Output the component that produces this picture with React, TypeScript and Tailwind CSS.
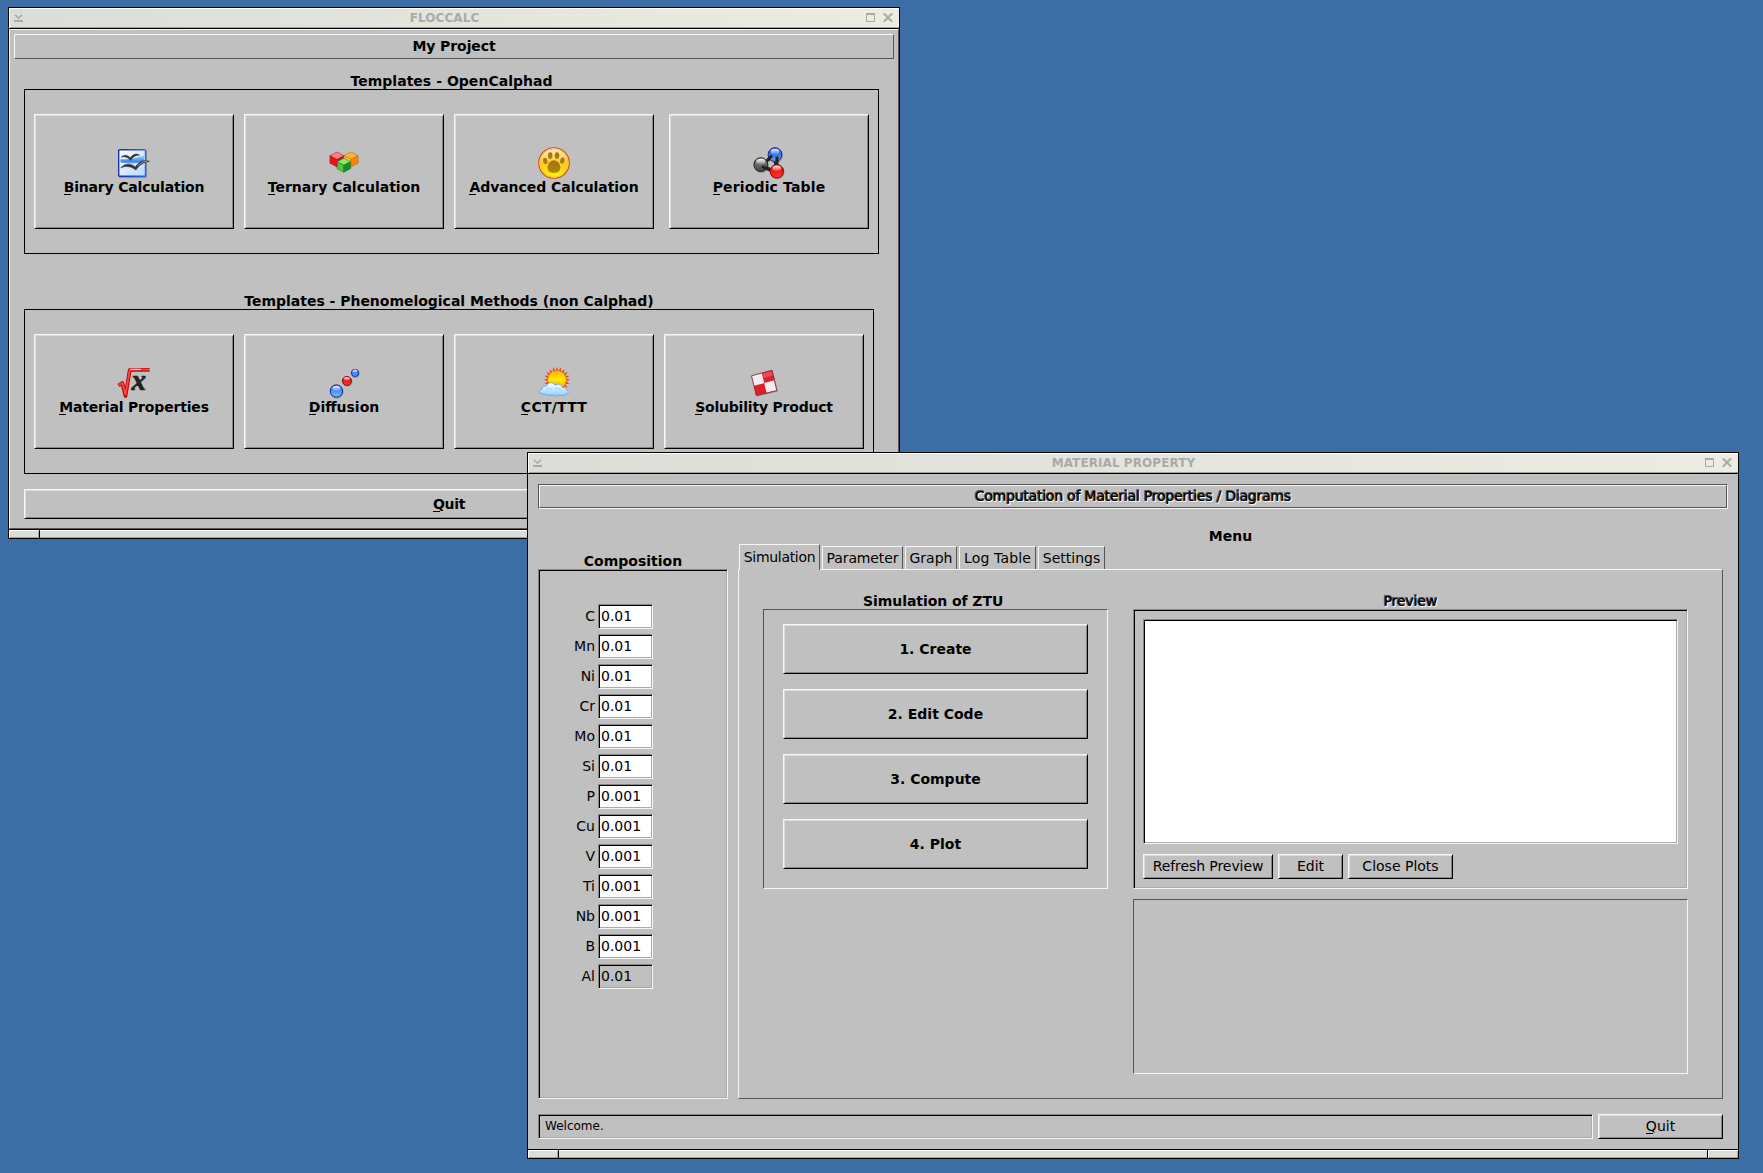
import React from "react";

const UP =
  "border border-t-[#f6f6f6] border-l-[#f6f6f6] border-r-black border-b-black shadow-[inset_1px_1px_#dcdcdc,inset_-1px_-1px_#858585]";
const DOWN =
  "border border-t-[#858585] border-l-[#858585] border-r-[#f6f6f6] border-b-[#f6f6f6] shadow-[inset_1px_1px_#000,inset_-1px_-1px_#aaaaaa]";
const THIN_UP = "border border-t-[#f6f6f6] border-l-[#f6f6f6] border-r-[#555] border-b-[#555]";
const THIN_DOWN = "border border-t-[#555] border-l-[#555] border-r-[#f6f6f6] border-b-[#f6f6f6]";
const ENGRAVED_TEXT =
  "[text-shadow:0_-1px_#555,-1px_-1px_#555,-1px_0_#555,0_1px_#f6f6f6,1px_1px_#f6f6f6,1px_0_#f6f6f6]";
const GROUP_LABEL = "h-[17px] text-center font-bold leading-[19px]";

function Mnemonic({ text, className = "" }: { text: string; className?: string }) {
  return (
    <span
      className={`relative whitespace-nowrap after:absolute after:left-0 after:top-[15px] after:h-px after:w-[7px] after:bg-black ${className}`}
    >
      {text}
    </span>
  );
}

function TitleBar({ title }: { title: string }) {
  return (
    <div className="flex h-[21px] shrink-0 items-center border-b border-black bg-gradient-to-r from-[#dcddd8] to-[#ecece2] pl-[5px] pr-[6px] shadow-[inset_1px_1px_#fff,inset_0_-1px_#a2a49c]">
      <svg width="9" height="9" viewBox="0 0 9 9" className="mt-px shrink-0" fill="none" stroke="#a9a9a6">
        <path d="M1 0.8L4.5 4.3L8 0.8" strokeWidth="1.5" />
        <path d="M0 7H9" strokeWidth="2" />
      </svg>
      <div className="flex-1 text-center text-[12px] font-bold leading-[18px] tracking-[0.08px] text-[#aaaaa8]">{title}</div>
      <svg width="9" height="9" viewBox="0 0 9 9" className="mt-[-1px] shrink-0" fill="none" stroke="#a9a9a6">
        <path d="M0.5 0V8.5H8.5V0" />
        <path d="M0 1H9" strokeWidth="2" />
      </svg>
      <svg width="10" height="9" viewBox="0 0 10 9" className="ml-2 mt-[-1px] shrink-0" fill="none" stroke="#a9a9a6" strokeWidth="2">
        <path d="M0.8 0.3L9.2 8.7M9.2 0.3L0.8 8.7" />
      </svg>
    </div>
  );
}

function Handle() {
  const part = "h-full bg-[#dcddd6] shadow-[inset_1px_1px_#fff,inset_-1px_-1px_#a2a49c]";
  return (
    <div className="flex h-[9px] shrink-0 gap-px border-t border-black bg-black">
      <div className={`w-[30px] ${part}`} />
      <div className="h-full flex-1 bg-[#dcddd6] shadow-[inset_0_1px_#fff,inset_0_-1px_#a2a49c]" />
      <div className={`w-[30px] ${part}`} />
    </div>
  );
}

function Ball({ cx, cy, r, id, from, to, edge }: { cx: number; cy: number; r: number; id: string; from: string; to: string; edge: string }) {
  return (
    <g>
      <defs>
        <linearGradient id={id} x1="0" y1="0" x2="0" y2="1">
          <stop offset="0" stopColor={from} />
          <stop offset="1" stopColor={to} />
        </linearGradient>
        <linearGradient id={`${id}Shine`} x1="0" y1="0" x2="0" y2="1">
          <stop offset="0" stopColor="#fff" stopOpacity="0.95" />
          <stop offset="1" stopColor="#fff" stopOpacity="0.15" />
        </linearGradient>
      </defs>
      <circle cx={cx + 0.5} cy={cy + 0.8} r={r} fill="#000" opacity="0.25" />
      <circle cx={cx} cy={cy} r={r - 0.5} fill={`url(#${id})`} stroke={edge} />
      <ellipse cx={cx} cy={cy - r * 0.42} rx={r * 0.6} ry={r * 0.38} fill={`url(#${id}Shine)`} />
    </g>
  );
}

function Cube({ x, y, r, top, left, right, edge }: { x: number; y: number; r: number; top: string; left: string; right: string; edge: string }) {
  const w = r * 0.95;
  const h = r * 0.5;
  return (
    <g stroke={edge} strokeWidth="0.5" strokeLinejoin="round">
      <path d={`M${x} ${y - r}L${x + w} ${y - h}L${x} ${y}L${x - w} ${y - h}Z`} fill={top} />
      <path d={`M${x - w} ${y - h}L${x} ${y}V${y + r}L${x - w} ${y + h}Z`} fill={left} />
      <path d={`M${x + w} ${y - h}L${x} ${y}V${y + r}L${x + w} ${y + h}Z`} fill={right} />
    </g>
  );
}

function Icon({ children }: { children: React.ReactNode }) {
  return (
    <svg width="32" height="32" viewBox="0 0 32 32" className="shrink-0 overflow-visible">
      {children}
    </svg>
  );
}

const BinaryIcon = () => (
  <Icon>
    <defs>
      <linearGradient id="doc" x1="0" y1="0" x2="1" y2="1">
        <stop offset="0" stopColor="#ffffff" />
        <stop offset="1" stopColor="#b0d8ff" />
      </linearGradient>
      <linearGradient id="docEdge" x1="0" y1="0" x2="1" y2="0">
        <stop offset="0" stopColor="#1c2fa8" />
        <stop offset="1" stopColor="#2468ee" />
      </linearGradient>
      <linearGradient id="sky" x1="0" y1="0" x2="0" y2="1">
        <stop offset="0" stopColor="#a8d2ff" />
        <stop offset="0.75" stopColor="#3a86f4" />
        <stop offset="1" stopColor="#8cc2ff" />
      </linearGradient>
    </defs>
    <rect x="1" y="3" width="28" height="28" rx="1.500" fill="#000" opacity="0.25" />
    <rect x="0.700" y="2.700" width="26.800" height="26.600" rx="1" fill="url(#doc)" stroke="url(#docEdge)" strokeWidth="1.400" />
    <path d="M2.500 12C9 13 18 11 26 8.500V15.500C18 17 9 17 2.500 15.500Z" fill="url(#sky)" />
    <path d="M3 10.500C6 7 10 8 12.300 11C14 8 18 5.500 21.500 8.200C18 8 15 9.500 12.500 13.500C10 10 6 9 3 10.500Z" fill="#333" stroke="#333" strokeWidth="0.500" />
    <path d="M2.800 21C7 15.500 13 16.500 17.500 20C21 14.500 25 12.500 31.500 14.300C25.500 15.500 21 18 18 23C13 19 7 18.500 2.800 21Z" fill="#333" stroke="#333" strokeWidth="0.600" />
    <path d="M20 18.500C23 15.500 26 14.500 29 14.500" stroke="#aaa" strokeWidth="0.900" fill="none" />
  </Icon>
);

const TernaryIcon = () => (
  <Icon>
    <Cube x={9} y={12.5} r={7.5} top="#ff7d84" left="#f20c18" right="#cf1420" edge="#a3161c" />
    <Cube x={23} y={12.5} r={7.5} top="#ffb42c" left="#ffc03c" right="#ff8400" edge="#b8600c" />
    <Cube x={15.8} y={18.2} r={7} top="#8ae86c" left="#4cc838" right="#12912a" edge="#17701c" />
  </Icon>
);

const PawIcon = () => (
  <Icon>
    <defs>
      <linearGradient id="coin" x1="0" y1="0" x2="0" y2="1">
        <stop offset="0" stopColor="#fff3dc" />
        <stop offset="0.5" stopColor="#ffc430" />
        <stop offset="1" stopColor="#fff600" />
      </linearGradient>
      <linearGradient id="pad" x1="0" y1="0" x2="0" y2="1">
        <stop offset="0" stopColor="#a5710c" />
        <stop offset="1" stopColor="#a98900" />
      </linearGradient>
    </defs>
    <circle cx="16" cy="16" r="15.300" fill="url(#coin)" stroke="#cc4b1c" strokeWidth="1.100" />
    <circle cx="16" cy="16" r="14.200" fill="none" stroke="#ffc23a" strokeWidth="1" />
    <g fill="url(#pad)">
      <ellipse cx="12.200" cy="8.600" rx="2.300" ry="3.400" />
      <ellipse cx="19" cy="8.600" rx="2.300" ry="3.400" />
      <ellipse cx="7.300" cy="14" rx="2.100" ry="3.200" transform="rotate(-15 7.300 14)" />
      <ellipse cx="24.300" cy="13.600" rx="2.100" ry="3.200" transform="rotate(15 24.300 13.600)" />
      <path d="M16 13.200C19.500 13.200 22.300 17 22.300 20.500C22.300 24 20 25.800 16 25.800S9.600 24 9.600 20.500C9.600 17 12.500 13.200 16 13.200Z" />
    </g>
  </Icon>
);

const MoleculeIcon = () => (
  <Icon>
    <path d="M22 8L8 18L23 25Z" fill="none" stroke="#2a2a2a" strokeWidth="3" />
    <Ball id="mBlack" cx={7.8} cy={17.6} r={7.4} from="#8c8c8c" to="#444" edge="#222" />
    <Ball id="mBlue" cx={22} cy={7.6} r={7.4} from="#1546d8" to="#5fa2ff" edge="#12309c" />
    <path d="M9 19.500L18 23.500M14.500 13L19 8.500M24 9.500V18" stroke="#222" strokeWidth="3" />
    <Ball id="mRed" cx={23.8} cy={24.3} r={7.2} from="#e30000" to="#ff3a30" edge="#9c0000" />
  </Icon>
);

const RootIcon = () => (
  <Icon>
    <path d="M0.500 18.500L4.300 16L7.500 29L11.800 2.800H31.500" fill="none" stroke="#b40f0f" strokeWidth="3.800" strokeLinejoin="round" />
    <path d="M1 18L4.500 16L7.500 28L11.800 2.600H31" fill="none" stroke="#ff4545" strokeWidth="1.700" />
    <path d="M12.500 2.300H23" stroke="#ffd4d4" strokeWidth="1.200" />
    <text x="13.500" y="22.500" fontFamily="Liberation Serif" fontStyle="italic" fontWeight="bold" fontSize="29" fill="#222" stroke="#222" strokeWidth="0.700">
      x
    </text>
  </Icon>
);

const DiffusionIcon = () => (
  <Icon>
    <Ball id="dBig" cx={8.4} cy={24} r={6.7} from="#1f5ef0" to="#7cbcff" edge="#142f96" />
    <Ball id="dRed" cx={18.9} cy={13.9} r={5} from="#d00000" to="#ff3a30" edge="#8f0d0d" />
    <Ball id="dSmall" cx={27} cy={5.9} r={4.1} from="#1f5ef0" to="#5ca4ff" edge="#142f96" />
  </Icon>
);

const RAYS = Array.from({ length: 20 }, (_, i) => i * 18);

const WeatherIcon = () => (
  <Icon>
    <defs>
      <linearGradient id="sun" x1="0" y1="0" x2="0" y2="1">
        <stop offset="0" stopColor="#ffb400" />
        <stop offset="0.5" stopColor="#ffea00" />
        <stop offset="1" stopColor="#ff9c00" />
      </linearGradient>
      <linearGradient id="cloud" x1="0" y1="0" x2="0" y2="1">
        <stop offset="0" stopColor="#ffffff" />
        <stop offset="1" stopColor="#8ccfff" />
      </linearGradient>
    </defs>
    {RAYS.map((a) => (
      <path key={a} d="M17.400 4.500L19 -0.300L20.600 4.500Z" fill="#f2381c" transform={`rotate(${a} 19 12.800)`} />
    ))}
    <circle cx="19" cy="12.800" r="9.300" fill="url(#sun)" stroke="#f58a10" strokeWidth="0.800" />
    <path d="M4 27C0.500 26.500 0.500 22.500 4 22C4 19.500 6.500 18.500 8.500 19.300C9.500 15 15.500 14.500 17 18.300C20 16 24 17.500 24.300 20.500C27 20 28.800 21.500 28.500 23C31.500 24 30.500 27.300 27.500 27.300C26 29 23 29 21.500 28C19 29.300 15.500 29 14 27.800C11.500 28.800 9 28.500 7.500 27.300Z" fill="url(#cloud)" stroke="#5a9fe6" strokeWidth="0.800" />
    <path d="M8 23C10 20.500 13 21 14 23M17 22C19 20 22 21 22.500 23.500" fill="none" stroke="#90c8f6" strokeWidth="0.900" />
  </Icon>
);

const CheckerIcon = () => (
  <Icon>
    <path d="M4 9.500L24.700 3.800L29.800 24.500L9 29.500Z" fill="#000" opacity="0.3" />
    <path d="M3.500 8.800L24 3.200L28.800 23.500L8.300 28.500Z" fill="#f0eef4" />
    <path d="M13.750 6L24 3.200L26.400 13.350L16.150 16.100Z" fill="#dc2430" />
    <path d="M5.900 18.650L16.150 16.100L18.550 26L8.300 28.500Z" fill="#e01c24" />
    <path d="M14.500 6.500L23.500 4.200L24.500 8.500L15.300 11Z" fill="#f0767c" opacity="0.5" />
    <path d="M3.500 8.800L24 3.200L28.800 23.500L8.300 28.500Z" fill="none" stroke="#94262c" strokeWidth="0.900" strokeLinejoin="round" />
  </Icon>
);

function TemplateButton({
  icon,
  label,
  className = "",
  tracking = "",
}: {
  icon: React.ReactNode;
  label: string;
  className?: string;
  tracking?: string;
}) {
  return (
    <button className={`flex h-[115px] w-[200px] flex-col items-center pt-8 font-bold leading-4 ${UP} ${className}`}>
      {icon}
      <Mnemonic text={label} className={tracking} />
    </button>
  );
}

function ProjectWindow() {
  return (
    <section className="absolute left-2 top-[7px] flex h-[532px] w-[892px] flex-col border border-black bg-[#c0c0c0]">
      <TitleBar title="FLOCCALC" />
      <div className={`flex flex-1 flex-col px-1 pt-1 ${THIN_UP}`}>
        <div className={`h-[25px] text-center font-bold leading-[22px] tracking-[-0.08px] ${THIN_UP}`}>My Project</div>
        <div className={`ml-[10px] mt-[13px] w-[855px] tracking-[0.03px] ${GROUP_LABEL}`}>Templates - OpenCalphad</div>
        <div className="ml-[10px] flex h-[165px] w-[855px] gap-[10px] border border-black pl-[9px] pt-6">
          <TemplateButton icon={<BinaryIcon />} label="Binary Calculation" tracking="tracking-[-0.18px]" />
          <TemplateButton icon={<TernaryIcon />} label="Ternary Calculation" />
          <TemplateButton icon={<PawIcon />} label="Advanced Calculation" tracking="tracking-[-0.05px]" />
          <TemplateButton icon={<MoleculeIcon />} label="Periodic Table" className="ml-[5px]" tracking="tracking-[0.15px]" />
        </div>
        <div className={`ml-[10px] mt-[38px] w-[850px] tracking-[-0.02px] ${GROUP_LABEL}`}>
          Templates - Phenomelogical Methods (non Calphad)
        </div>
        <div className="ml-[10px] flex h-[165px] w-[850px] gap-[10px] border border-black pl-[9px] pt-6">
          <TemplateButton icon={<RootIcon />} label="Material Properties" tracking="tracking-[-0.17px]" />
          <TemplateButton icon={<DiffusionIcon />} label="Diffusion" />
          <TemplateButton icon={<WeatherIcon />} label="CCT/TTT" tracking="tracking-[0.25px]" />
          <TemplateButton icon={<CheckerIcon />} label="Solubility Product" tracking="tracking-[-0.2px]" />
        </div>
        <button className={`ml-[10px] mt-[15px] h-[30px] w-[850px] text-center font-bold leading-7 ${UP}`}>
          <Mnemonic text="Quit" className="tracking-[-0.3px]" />
        </button>
      </div>
      <Handle />
    </section>
  );
}

const ELEMENTS: [string, string][] = [
  ["C", "0.01"],
  ["Mn", "0.01"],
  ["Ni", "0.01"],
  ["Cr", "0.01"],
  ["Mo", "0.01"],
  ["Si", "0.01"],
  ["P", "0.001"],
  ["Cu", "0.001"],
  ["V", "0.001"],
  ["Ti", "0.001"],
  ["Nb", "0.001"],
  ["B", "0.001"],
  ["Al", "0.01"],
];

function Composition() {
  return (
    <div className="w-[190px]">
      <div className={`mt-[35px] ${GROUP_LABEL}`}>Composition</div>
      <div className={`flex h-[530px] flex-col gap-[5px] pt-[34px] ${DOWN}`}>
        {ELEMENTS.map(([name, value]) => (
          <div key={name} className="flex h-[25px]">
            <span className="w-[59px] pr-[3px] text-right leading-6">{name}</span>
            <div className={`w-[55px] pl-[2px] leading-[22px] ${name === "Al" ? "" : "bg-white"} ${DOWN}`}>{value}</div>
          </div>
        ))}
      </div>
    </div>
  );
}

function Tabs() {
  const tab = "h-[23px] border border-b-0 border-t-[#f6f6f6] border-l-[#f6f6f6] border-r-[#555] text-center leading-[22px] whitespace-nowrap";
  return (
    <div className="relative z-10 mb-[-1px] flex h-[26px] items-end gap-[2px] pb-px pl-px">
      <div className="mb-[-1px] h-[26px] w-[81px] whitespace-nowrap border border-b-0 border-l-[#f6f6f6] border-r-[#555] border-t-[#f6f6f6] bg-[#c0c0c0] text-center leading-6 tracking-[-0.3px]">
        Simulation
      </div>
      <div className={`w-[81px] tracking-[-0.12px] ${tab}`}>Parameter</div>
      <div className={`w-[52px] ${tab}`}>Graph</div>
      <div className={`w-[77px] tracking-[0.15px] ${tab}`}>Log Table</div>
      <div className={`w-[67px] ${tab}`}>Settings</div>
    </div>
  );
}

function MaterialWindow() {
  return (
    <section className="absolute left-[527px] top-[452px] flex h-[707px] w-[1212px] flex-col border border-black bg-[#c0c0c0]">
      <TitleBar title="MATERIAL PROPERTY" />
      <div className="flex flex-1 flex-col px-[10px] pt-[10px]">
        <div className="h-[25px] border border-b-[#f6f6f6] border-l-[#555] border-r-[#f6f6f6] border-t-[#555]">
          <div
            className={`h-[23px] border border-b-[#555] border-l-[#f6f6f6] border-r-[#555] border-t-[#f6f6f6] text-center leading-5 tracking-[-0.22px] ${ENGRAVED_TEXT}`}
          >
            Computation of Material Properties / Diagrams
          </div>
        </div>
        <div className="flex gap-[10px] pt-2">
          <Composition />
          <div className="w-[985px]">
            <div className={`mt-[10px] ${GROUP_LABEL}`}>Menu</div>
            <Tabs />
            <div className={`flex h-[530px] gap-[25px] pl-6 ${THIN_UP}`}>
              <div className="w-[345px]">
                <div className={`mt-[22px] tracking-[-0.06px] ${GROUP_LABEL}`}>Simulation of ZTU&nbsp;</div>
                <div className={`flex h-[280px] flex-col items-center gap-[15px] pt-[14px] ${THIN_DOWN}`}>
                  {["1. Create", "2. Edit Code", "3. Compute", "4. Plot"].map((label) => (
                    <button key={label} className={`h-[50px] w-[305px] font-bold ${UP}`}>
                      {label}
                    </button>
                  ))}
                </div>
              </div>
              <div className="w-[555px]">
                <div className={`mt-[22px] h-[17px] text-center leading-[19px] tracking-[-0.15px] ${ENGRAVED_TEXT}`}>Preview</div>
                <div className={`h-[280px] px-[9px] pt-[9px] ${DOWN}`}>
                  <div className={`h-[225px] bg-white ${DOWN}`} />
                  <div className="mt-[10px] flex h-[25px] gap-[5px] leading-[22px]">
                    <button className={`w-[130px] pb-px tracking-[-0.08px] ${UP}`}>Refresh Preview</button>
                    <button className={`w-[65px] pb-px ${UP}`}>Edit</button>
                    <button className={`w-[105px] pb-px ${UP}`}>Close Plots</button>
                  </div>
                </div>
                <div className={`mt-[10px] h-[175px] ${THIN_DOWN}`} />
              </div>
            </div>
          </div>
        </div>
        <div className="mt-[15px] flex h-[25px] gap-[5px]">
          <div className={`w-[1055px] pl-[6px] text-[12px] leading-[22px] ${DOWN}`}>Welcome.</div>
          <button className={`w-[125px] pb-px leading-[22px] ${UP}`}>
            <Mnemonic text="Quit" />
          </button>
        </div>
      </div>
      <Handle />
    </section>
  );
}

export default function App() {
  return (
    <main className="relative h-[1173px] w-[1763px] overflow-hidden bg-[#3a6ea5] font-['DejaVu_Sans',sans-serif] text-[14px] text-black">
      <ProjectWindow />
      <MaterialWindow />
    </main>
  );
}
